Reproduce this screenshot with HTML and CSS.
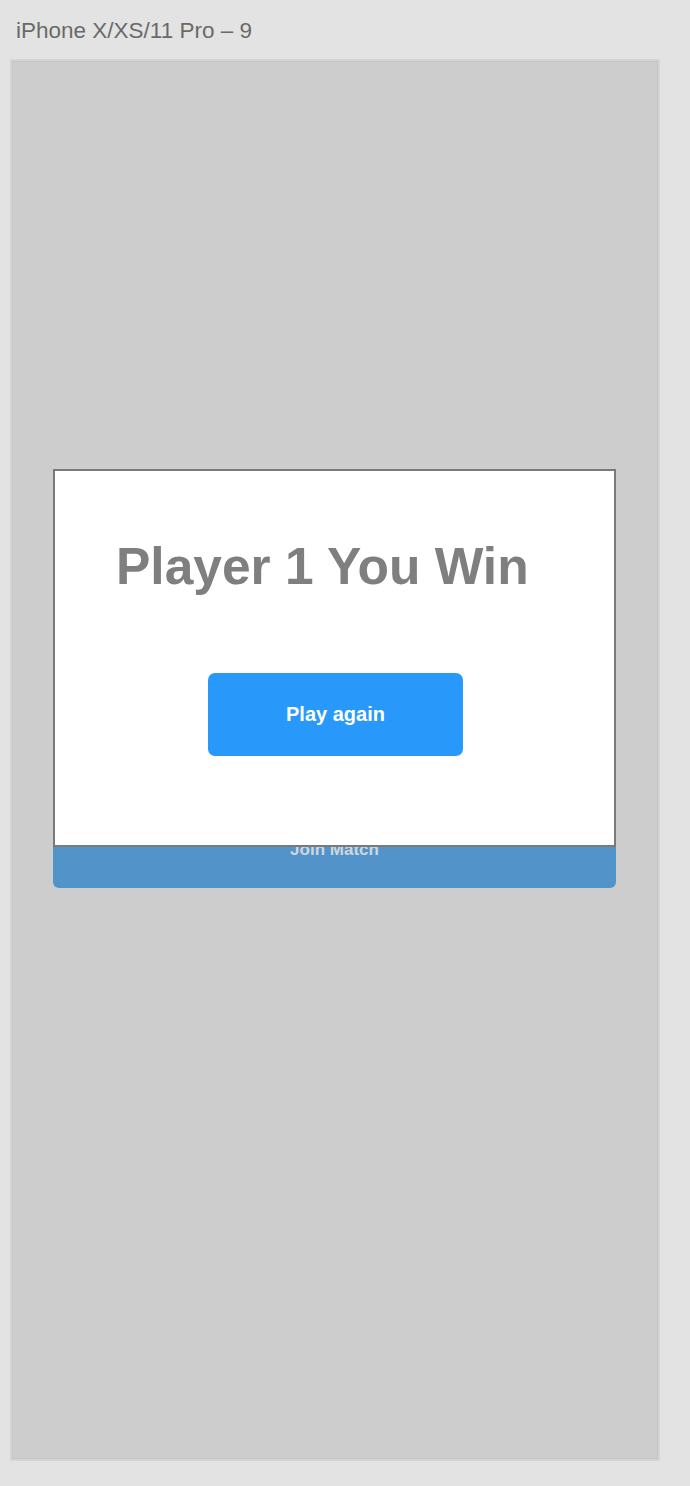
FILE: index.html
```html
<!DOCTYPE html>
<html lang="en">
<head>
<meta charset="utf-8">
<title>iPhone X/XS/11 Pro – 9</title>
<link rel="stylesheet" href="styles.css">
</head>
<body>
  <div class="canvas">
    <div class="artboard-label">iPhone X/XS/11 Pro – 9</div>
    <div class="artboard">
      <div class="screen">
        <div class="menu-btn"></div>
        <div class="menu-btn"><span class="menu-btn-text">Join Match</span></div>
      </div>
      <div class="modal">
        <h1 class="modal-title">Player 1 You Win</h1>
        <button class="play-btn" type="button">Play again</button>
      </div>
    </div>
  </div>
</body>
</html>
```

FILE: styles.css
```css
html, body {
  margin: 0;
  padding: 0;
  background: #e3e3e3;
}

.canvas {
  width: 690px;
  height: 1486px;
  padding: 0 0 0 10px;
  box-sizing: border-box;
  font-family: "Liberation Sans", Arial, sans-serif;
}

.artboard-label {
  height: 59px;
  box-sizing: border-box;
  padding: 19px 0 0 6px;
  font-size: 22.5px;
  line-height: 24px;
  color: #6a6a6a;
  white-space: nowrap;
}

.artboard {
  position: relative;
  width: 650px;
  height: 1402px;
  box-sizing: border-box;
  border: 2px solid #d5d5d5;
  box-shadow: inset 0 0 0 1px #c6c6c6;
  background: #cdcdcd;
}

.screen {
  display: flex;
  flex-direction: column;
  gap: 105px;
  padding: 576px 0 0 41px;
}

.menu-btn {
  width: 563px;
  height: 73px;
  border-radius: 6px;
  background: #5294ca;
  display: flex;
  align-items: center;
  justify-content: center;
}

.menu-btn-text {
  font-weight: bold;
  font-size: 17px;
  color: #cfd6dd;
  padding-bottom: 4px;
}

.modal {
  position: absolute;
  left: 41px;
  top: 408px;
  width: 563px;
  height: 378px;
  box-sizing: border-box;
  border: 2px solid #7a7a7a;
  background: #ffffff;
  display: flex;
  flex-direction: column;
}

.modal-title {
  margin: 0;
  padding: 66px 0 0 61px;
  font-size: 51.5px;
  line-height: 58px;
  font-weight: bold;
  color: #7f7f7f;
  white-space: nowrap;
}

.play-btn {
  align-self: center;
  margin: 78px 0 0 2px;
  width: 255px;
  height: 83px;
  border: none;
  border-radius: 7px;
  background: #2899fb;
  color: #ffffff;
  font-family: "Liberation Sans", Arial, sans-serif;
  font-size: 20px;
  font-weight: bold;
  padding: 0;
  cursor: pointer;
}
```
